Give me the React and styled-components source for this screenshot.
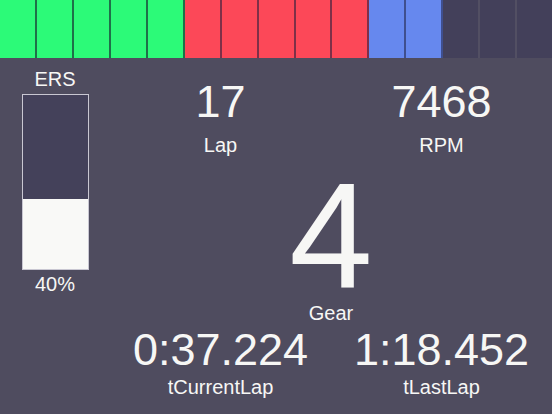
import React from "react";
import styled, { createGlobalStyle } from "styled-components";

const Global = createGlobalStyle`
  html, body { margin: 0; padding: 0; background: #4f4c5f; }
  body { font-family: "Liberation Sans", Arial, sans-serif; color: #f7f7f5; }
`;

const Screen = styled.div`
  width: 552px;
  height: 414px;
  background: #4f4c5f;
  display: flex;
  flex-direction: column;
  overflow: hidden;
`;

const ShiftBar = styled.div`
  display: flex;
  height: 58px;
  flex: none;
`;

const palette = {
  green: { fill: "#2cfa78", sep: "#1f7049" },
  red: { fill: "#fc4858", sep: "#7e3048" },
  blue: { fill: "#6688ee", sep: "#3f4f8e" },
  off: { fill: "#43405a", sep: "#524f63" },
};

const Light = styled.div`
  flex: 1;
  box-sizing: border-box;
  background: ${(p) => palette[p.$tone].fill};
  border-right: 2px solid ${(p) => palette[p.$tone].sep};
  &:last-child { border-right: none; }
`;

const Body = styled.div`
  flex: 1;
  display: flex;
`;

const ErsColumn = styled.div`
  width: 110px;
  flex: none;
  display: flex;
  flex-direction: column;
  align-items: center;
  padding-top: 11px;
`;

const SmallText = styled.div`
  font-size: 20px;
  line-height: 1;
  margin-top: ${(p) => p.$mt || 0}px;
`;

const Gauge = styled.div`
  width: 67px;
  height: 176px;
  box-sizing: border-box;
  border: 1px solid #c9c7d2;
  background: #44415a;
  display: flex;
  flex-direction: column;
  justify-content: flex-end;
  margin-top: 5px;
`;

const GaugeFill = styled.div`
  background: #f9f9f7;
  width: 100%;
`;

const Panel = styled.div`
  flex: 1;
  display: flex;
  flex-direction: column;
  padding-top: 21px;
`;

const Row = styled.div`
  display: grid;
  grid-template-columns: 1fr 1fr;
  margin-top: ${(p) => p.$mt || 0}px;
`;

const Stat = styled.div`
  display: flex;
  flex-direction: column;
  align-items: center;
  margin-top: ${(p) => p.$mt || 0}px;
`;

const Value = styled.div`
  font-size: ${(p) => p.$size}px;
  line-height: ${(p) => p.$lh || 1};
  white-space: nowrap;
`;

const Label = styled.div`
  font-size: 20px;
  line-height: 1;
  white-space: nowrap;
  margin-top: ${(p) => p.$gap}px;
`;

const lights = [
  "green", "green", "green", "green", "green",
  "red", "red", "red", "red", "red",
  "blue", "blue",
  "off", "off", "off",
];

export default function App() {
  const ers = 40;
  return (
    <>
      <Global />
      <Screen>
        <ShiftBar>
          {lights.map((t, i) => (
            <Light key={i} $tone={t} />
          ))}
        </ShiftBar>
        <Body>
          <ErsColumn>
            <SmallText>ERS</SmallText>
            <Gauge>
              <GaugeFill style={{ height: `${ers}%` }} />
            </Gauge>
            <SmallText $mt={4}>{ers}%</SmallText>
          </ErsColumn>
          <Panel>
            <Row>
              <Stat>
                <Value $size={45}>17</Value>
                <Label $gap={11}>Lap</Label>
              </Stat>
              <Stat>
                <Value $size={45}>7468</Value>
                <Label $gap={11}>RPM</Label>
              </Stat>
            </Row>
            <Stat $mt={17}>
              <Value $size={150} $lh={0.85}>4</Value>
              <Label $gap={3}>Gear</Label>
            </Stat>
            <Row $mt={4}>
              <Stat>
                <Value $size={45}>0:37.224</Value>
                <Label $gap={5}>tCurrentLap</Label>
              </Stat>
              <Stat>
                <Value $size={45}>1:18.452</Value>
                <Label $gap={5}>tLastLap</Label>
              </Stat>
            </Row>
          </Panel>
        </Body>
      </Screen>
    </>
  );
}
